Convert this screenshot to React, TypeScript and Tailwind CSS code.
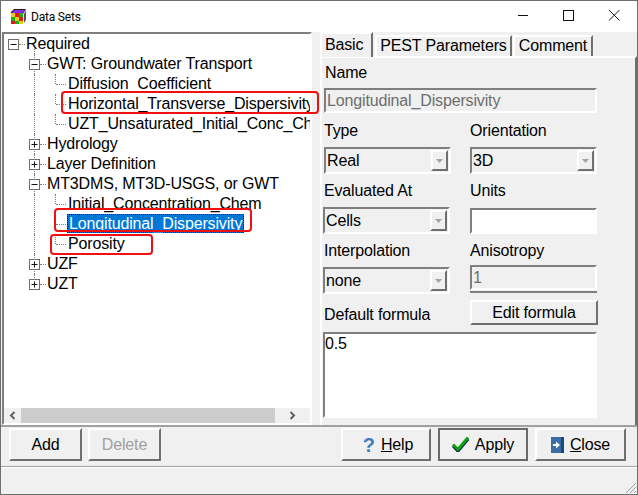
import React from "react";

const sunken = "border-2 border-t-[#7f7f7f] border-l-[#7f7f7f] border-b-white border-r-white";
const raised = "border-2 border-t-white border-l-white border-b-[#6f6f6f] border-r-[#6f6f6f]";
const tabEdge = "border-t-2 border-l-2 border-r-2 border-t-white border-l-white border-r-[#6f6f6f]";

type Row = {
    label: string;
    level: number;
    box?: "plus" | "minus";
    selected?: boolean;
};

const rows: Row[] = [
    { label: "Required", level: 0, box: "minus" },
    { label: "GWT: Groundwater Transport", level: 1, box: "minus" },
    { label: "Diffusion_Coefficient", level: 2 },
    { label: "Horizontal_Transverse_Dispersivity", level: 2 },
    { label: "UZT_Unsaturated_Initial_Conc_Chem", level: 2 },
    { label: "Hydrology", level: 1, box: "plus" },
    { label: "Layer Definition", level: 1, box: "plus" },
    { label: "MT3DMS, MT3D-USGS, or GWT", level: 1, box: "minus" },
    { label: "Initial_Concentration_Chem", level: 2 },
    { label: "Longitudinal_Dispersivity", level: 2, selected: true },
    { label: "Porosity", level: 2 },
    { label: "UZF", level: 1, box: "plus" },
    { label: "UZT", level: 1, box: "plus" },
];

const ExpandBox = ({ kind }: { kind: "plus" | "minus" }) => (
    <svg width="11" height="11" viewBox="0 0 11 11" className="block">
        <rect x="0.5" y="0.5" width="10" height="10" fill="white" stroke="#6f6f6f" />
        <path d="M2.5 5.5H8.5" stroke="#111" />
        {kind === "plus" ? <path d="M5.5 2.5V8.5" stroke="#111" /> : null}
    </svg>
);

const TreeRow = ({ row, last }: { row: Row; last: boolean }) => {
    const indent = 4 + row.level * 21;
    return (
        <div className="relative flex h-5 items-center whitespace-nowrap" style={{ paddingLeft: indent }}>
            {/* guide lines */}
            {row.level === 0 ? (
                <div className="absolute bottom-0 left-[30px] h-[5px] border-l border-dotted border-[#7f7f7f]" />
            ) : null}
            {row.level > 0 ? (
                <div className={`absolute left-[30px] top-0 border-l border-dotted border-[#7f7f7f] ${last ? "h-2.5" : "h-5"}`} />
            ) : null}
            {row.level === 2 ? (
                <div className="absolute left-[51px] top-0 h-2.5 border-l border-dotted border-[#7f7f7f]" />
            ) : null}
            {row.box ? (
                <>
                    <div className="relative z-10 w-[11px] shrink-0">
                        <ExpandBox kind={row.box} />
                    </div>
                    <div className="w-[6px] shrink-0 border-t border-dotted border-[#7f7f7f]" />
                    <span className="ml-px text-[16px] leading-5 text-black">{row.label}</span>
                </>
            ) : (
                <>
                    <div className="ml-[6px] w-[10px] shrink-0 border-t border-dotted border-[#7f7f7f]" />
                    {row.selected ? (
                        <span className="ml-px h-[19px] self-start border border-dotted border-[#1a1a1a] bg-[#0078d7] px-px text-[16px] leading-[18px] text-white">
                            {row.label}
                        </span>
                    ) : (
                        <span className="ml-[2px] text-[16px] leading-5 text-black">{row.label}</span>
                    )}
                </>
            )}
        </div>
    );
};

const ComboField = ({ value, className = "" }: { value: string; className?: string }) => (
    <div className={`flex h-[27px] w-[127px] items-center justify-between ${sunken} ${className}`}>
        <span className="pl-px text-[16px] leading-5 text-black">{value}</span>
        <div className={`mr-px flex h-[21px] w-[17px] items-center justify-center ${raised}`}>
            <svg width="7" height="4" viewBox="0 0 7 4"><path d="M0 0H7L3.5 4Z" fill="#a3a3a3" /></svg>
        </div>
    </div>
);

const TextField = ({ value, disabled, className = "" }: { value: string; disabled?: boolean; className?: string }) => (
    <div className={`flex items-center ${sunken} ${disabled ? "bg-[#f0f0f0] text-[#6d6d6d]" : "bg-white text-black"} ${className}`}>
        <span className="pl-px text-[16px] leading-5">{value}</span>
    </div>
);

const Label = ({ children, className = "" }: { children: React.ReactNode; className?: string }) => (
    <div className={`h-5 text-[16px] leading-5 text-black ${className}`}>{children}</div>
);

const ActionButton = ({ children, width, strong, className = "" }: { children: React.ReactNode; width: string; strong?: boolean; className?: string }) => (
    <button className={`flex h-[33px] items-center justify-center gap-[6px] text-[16px] text-black ${width} ${strong ? "border-2 border-[#6a6a6a]" : raised} ${className}`}>
        {children}
    </button>
);

const CubeIcon = () => (
    <svg width="17" height="16" viewBox="0 0 17 16" className="block">
        <path d="M4 0H16L13 5V15H1V3Z" fill="#222" />
        <rect x="1" y="4" width="4" height="4" fill="#e8d010" />
        <rect x="5" y="4" width="4" height="4" fill="#e01818" />
        <rect x="9" y="4" width="4" height="4" fill="#18b018" />
        <rect x="1" y="8" width="4" height="4" fill="#18b018" />
        <rect x="5" y="8" width="4" height="4" fill="#e8d010" />
        <rect x="9" y="8" width="4" height="4" fill="#e01818" />
        <rect x="1" y="12" width="4" height="3" fill="#e01818" />
        <rect x="5" y="12" width="4" height="3" fill="#18b018" />
        <rect x="9" y="12" width="4" height="3" fill="#e8d010" />
        <path d="M4 1H15L13 4H2Z" fill="#8a2be2" />
        <path d="M14 5L16 1V11L14 14Z" fill="#555" />
    </svg>
);

const Note = ({ className }: { className: string }) => (
    <div className={`absolute rounded-[4px] border-2 border-[#f01010] ${className}`} />
);

export default function App() {
    return (
        <div className="relative flex h-[495px] w-[638px] flex-col overflow-hidden border border-[#6f6f6f] bg-[#f0f0f0] font-['Liberation_Sans',sans-serif] tracking-[-0.15px]">
            <div className="flex h-[31px] shrink-0 items-center bg-white pl-[9px]">
                <CubeIcon />
                <span className="ml-[4px] font-['Roboto',sans-serif] text-[12px] tracking-[-0.2px] text-black">Data Sets</span>
                <div className="ml-auto flex items-start self-start">
                    <svg width="46" height="30" viewBox="0 0 46 30"><path d="M19 14.5H29" stroke="#111" /></svg>
                    <svg width="46" height="30" viewBox="0 0 46 30"><rect x="18.5" y="9.5" width="10" height="10" fill="none" stroke="#111" /></svg>
                    <svg width="46" height="30" viewBox="0 0 46 30"><path d="M18 9L28.5 19.5M28.5 9L18 19.5" stroke="#111" /></svg>
                </div>
            </div>

            <div className="flex h-[393px] shrink-0">
                <div className={`ml-px flex w-[310px] shrink-0 flex-col bg-white ${sunken}`}>
                    <div className="min-h-0 flex-1 overflow-hidden">
                        {rows.map((r, i) => <TreeRow key={r.label} row={r} last={i === rows.length - 1} />)}
                    </div>
                    <div className="flex h-[15px] shrink-0 items-stretch bg-[#f0f0f0]">
                        <div className="flex w-[17px] items-center justify-center">
                            <svg width="7" height="9" viewBox="0 0 7 9"><path d="M5.5 1L2 4.5L5.5 8" fill="none" stroke="#606060" strokeWidth="2" /></svg>
                        </div>
                        <div className="w-[254px] bg-[#cdcdcd]" />
                        <div className="flex flex-1 items-center justify-center">
                            <svg width="7" height="9" viewBox="0 0 7 9"><path d="M1.5 1L5 4.5L1.5 8" fill="none" stroke="#606060" strokeWidth="2" /></svg>
                        </div>
                    </div>
                </div>

                <div className="ml-[8px] flex min-w-0 flex-1 flex-col">
                    <div className="flex h-[25px] shrink-0 items-end">
                        <div className={`z-10 flex h-[25px] w-[53px] items-start bg-[#f0f0f0] pl-[3px] pt-px text-[16px] leading-[20px] text-black ${tabEdge}`}>Basic</div>
                        <div className={`ml-[2px] flex h-[22px] w-[137px] items-center justify-center pb-[2px] text-[16px] leading-5 text-black ${tabEdge}`}>PEST Parameters</div>
                        <div className={`ml-px flex h-[22px] w-[80px] items-center justify-center pb-[2px] text-[16px] leading-5 text-black ${tabEdge}`}>Comment</div>
                    </div>
                    <div className={`-mt-px min-h-0 flex-1 pl-[2px] pt-[5px] ${tabEdge}`}>
                        <Label className="pl-px">Name</Label>
                        <TextField value="Longitudinal_Dispersivity" disabled className="mt-[5px] h-[25px] w-[273px]" />
                        <div className="mt-[7px] grid w-[273px] grid-cols-[146px_127px]">
                            <Label className="mt-px">Type</Label>
                            <Label className="mt-px">Orientation</Label>
                            <ComboField value="Real" className="mt-[6px]" />
                            <ComboField value="3D" className="mt-[6px]" />
                            <Label className="mt-[7px]">Evaluated At</Label>
                            <Label className="mt-[7px]">Units</Label>
                            <ComboField value="Cells" className="mt-[6px] -ml-px" />
                            <TextField value="" className="mt-[7px] h-[26px] w-[127px]" />
                            <Label className="mt-[7px]">Interpolation</Label>
                            <Label className="mt-[7px]">Anisotropy</Label>
                            <ComboField value="none" className="mt-[6px] -ml-px" />
                            <div className="mt-[4px] h-[29px]">
                                <TextField value="1" disabled className="h-[25px] w-[127px]" />
                                <div className="mt-[1px] h-[2px] w-[127px] bg-[#7f7f7f]" />
                            </div>
                        </div>
                        <div className="mt-[6px] flex w-[274px] items-end justify-between">
                            <Label className="pb-px">Default formula</Label>
                            <button className={`h-[25px] w-[128px] text-[16px] leading-5 text-black ${raised}`}>Edit formula</button>
                        </div>
                        <div className={`-ml-px mt-[7px] h-[86px] w-[274px] bg-white text-[16px] leading-5 text-black ${sunken}`}>0.5</div>
                    </div>
                </div>
            </div>

            <div className="flex h-[41px] shrink-0 items-start border-t-2 border-[#a0a0a0] pt-[1px] pl-[8px] pr-[11px]">
                <ActionButton width="w-[73px]">Add</ActionButton>
                <div className="ml-[6px]">
                    <button className={`h-[33px] w-[73px] text-[16px] text-[#a0a0a0] ${raised}`}>Delete</button>
                </div>
                <div className="ml-auto flex gap-[7px]">
                    <ActionButton width="w-[90px]" className="pl-[4px]">
                        <span className="text-[20px] leading-none font-bold text-[#3f7fbf]">?</span>
                        <span><span className="underline">H</span>elp</span>
                    </ActionButton>
                    <ActionButton width="w-[90px]" strong>
                        <svg width="17" height="15" viewBox="0 0 17 15">
                            <path d="M1 9L6 14L16 2" fill="none" stroke="#06145a" strokeWidth="3" />
                            <path d="M1 7.5L6 12.5L16 0.5" fill="none" stroke="#10a010" strokeWidth="3" />
                        </svg>
                        <span>Apply</span>
                    </ActionButton>
                    <ActionButton width="w-[91px]">
                        <svg width="13" height="16" viewBox="0 0 13 16">
                            <rect width="13" height="16" fill="#3a6ea5" />
                            <rect x="10" width="3" height="16" fill="#1f4a7a" />
                            <path d="M2 7H5V4.5L9 8L5 11.5V9H2Z" fill="white" />
                        </svg>
                        <span><span className="underline">C</span>lose</span>
                    </ActionButton>
                </div>
            </div>

            <div className="relative min-h-0 flex-1 border-t border-[#a0a0a0]">
                <div className="h-px bg-white" />
                <svg width="13" height="13" viewBox="0 0 13 13" className="absolute bottom-0 right-0">
                    <path d="M12 2L2 12M12 6L6 12M12 10L10 12" stroke="#a0a0a0" />
                </svg>
            </div>

            <Note className="left-[60px] top-[90px] h-[23px] w-[258px]" />
            <Note className="left-[53px] top-[207px] h-[24px] w-[198px]" />
            <Note className="left-[49px] top-[233px] h-[21px] w-[103px]" />
        </div>
    );
}
